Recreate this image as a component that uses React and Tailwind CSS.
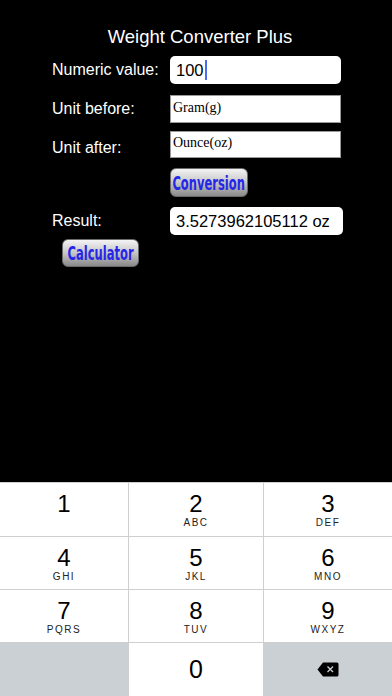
import React from "react";

const sans = { fontFamily: '"Liberation Sans", Arial, sans-serif' };

function Btn({ children, className }) {
  return (
    <div
      className={
        "flex items-center justify-center rounded-[6px] border border-[#6a6a6a] bg-gradient-to-b from-[#f4f4f4] via-[#c6c6c6] to-[#8a8a8a] " +
        className
      }
    >
      <span
        className="text-[20px] leading-[22px] font-bold text-[#2626e8] inline-block scale-x-[0.64] whitespace-nowrap"
        style={{ fontFamily: '"DejaVu Sans Condensed", "DejaVu Sans", sans-serif' }}
      >
        {children}
      </span>
    </div>
  );
}

function Key({ d, l, className = "" }) {
  return (
    <div className={"flex flex-col items-center bg-white " + className}>
      <div className="pt-[9px] text-[24px] leading-[24px] text-black" style={sans}>
        {d}
      </div>
      <div className="h-[12px] text-[10px] leading-[12px] tracking-[1.5px] text-[#222] mt-[1px]" style={sans}>
        {l}
      </div>
    </div>
  );
}

export default function App() {
  return (
    <div className="w-[392px] h-[696px] bg-black flex flex-col overflow-hidden" style={sans}>
      <div className="h-[482px] flex flex-col text-white">
        <div className="pt-[26px] pl-[8px] h-[47px] text-center text-[18.5px] leading-[21px]">Weight Converter Plus</div>
        <div className="pl-[52px] flex flex-col">
          <div className="mt-[9px] flex items-center h-[28px]">
            <div className="w-[118px] text-[16px]">Numeric value:</div>
            <div className="w-[171px] h-[28px] bg-white rounded-[5px] flex items-center pl-[6px] text-black text-[16.5px]">
              100<span className="inline-block w-[2px] h-[20px] bg-[#4a6cf0] ml-[1px]"></span>
            </div>
          </div>
          <div className="mt-[11px] flex items-center h-[28px]">
            <div className="w-[118px] text-[16px]">Unit before:</div>
            <div
              className="w-[171px] h-[28px] bg-white border border-[#9a9a9a] text-black text-[14px] pl-[2px] pt-[4px] leading-[16px]"
              style={{ fontFamily: '"Liberation Serif", "Times New Roman", serif' }}
            >
              Gram(g)
            </div>
          </div>
          <div className="mt-[8px] flex items-center h-[27px]">
            <div className="w-[118px] text-[16px] pt-[7px]">Unit after:</div>
            <div
              className="w-[171px] h-[27px] bg-white border border-[#9a9a9a] text-black text-[14px] pl-[2px] pt-[3px] leading-[16px]"
              style={{ fontFamily: '"Liberation Serif", "Times New Roman", serif' }}
            >
              Ounce(oz)
            </div>
          </div>
          <div className="mt-[10px] flex h-[29px]">
            <div className="w-[118px]"></div>
            <Btn className="w-[78px] h-[29px]">Conversion</Btn>
          </div>
          <div className="mt-[10px] flex items-center h-[28px]">
            <div className="w-[118px] text-[16px]">Result:</div>
            <div className="w-[173px] h-[28px] bg-white rounded-[5px] flex items-center pl-[6px] text-black text-[16.5px]">
              3.5273962105112 oz
            </div>
          </div>
          <div className="mt-[4px] pl-[10px] flex">
            <Btn className="w-[77px] h-[28px]">Calculator</Btn>
          </div>
        </div>
      </div>
      <div className="flex-1 bg-[#cfcfcf] flex flex-col gap-px pt-px">
        <div className="grid grid-cols-[128px_134px_128px] gap-px h-[53px]">
          <Key d="1" l="" />
          <Key d="2" l="ABC" />
          <Key d="3" l="DEF" />
        </div>
        <div className="grid grid-cols-[128px_134px_128px] gap-px h-[52px]">
          <Key d="4" l="GHI" />
          <Key d="5" l="JKL" />
          <Key d="6" l="MNO" />
        </div>
        <div className="grid grid-cols-[128px_134px_128px] gap-px h-[52px]">
          <Key d="7" l="PQRS" />
          <Key d="8" l="TUV" />
          <Key d="9" l="WXYZ" />
        </div>
        <div className="grid grid-cols-[128px_134px_128px] gap-px flex-1">
          <div className="bg-[#cbd0d4]"></div>
          <div className="bg-white flex items-center justify-center text-[25px] text-black">0</div>
          <div className="bg-[#cbd0d4] flex items-center justify-center">
            <svg width="22" height="15" viewBox="0 0 22 15">
              <path d="M6 0.5 H20 a1.5 1.5 0 0 1 1.5 1.5 V13 a1.5 1.5 0 0 1 -1.5 1.5 H6 L0.5 7.5 Z" fill="#000" />
              <path d="M10.5 4.5 L16 10 M16 4.5 L10.5 10" stroke="#cbd0d4" strokeWidth="1.3" />
            </svg>
          </div>
        </div>
      </div>
    </div>
  );
}
